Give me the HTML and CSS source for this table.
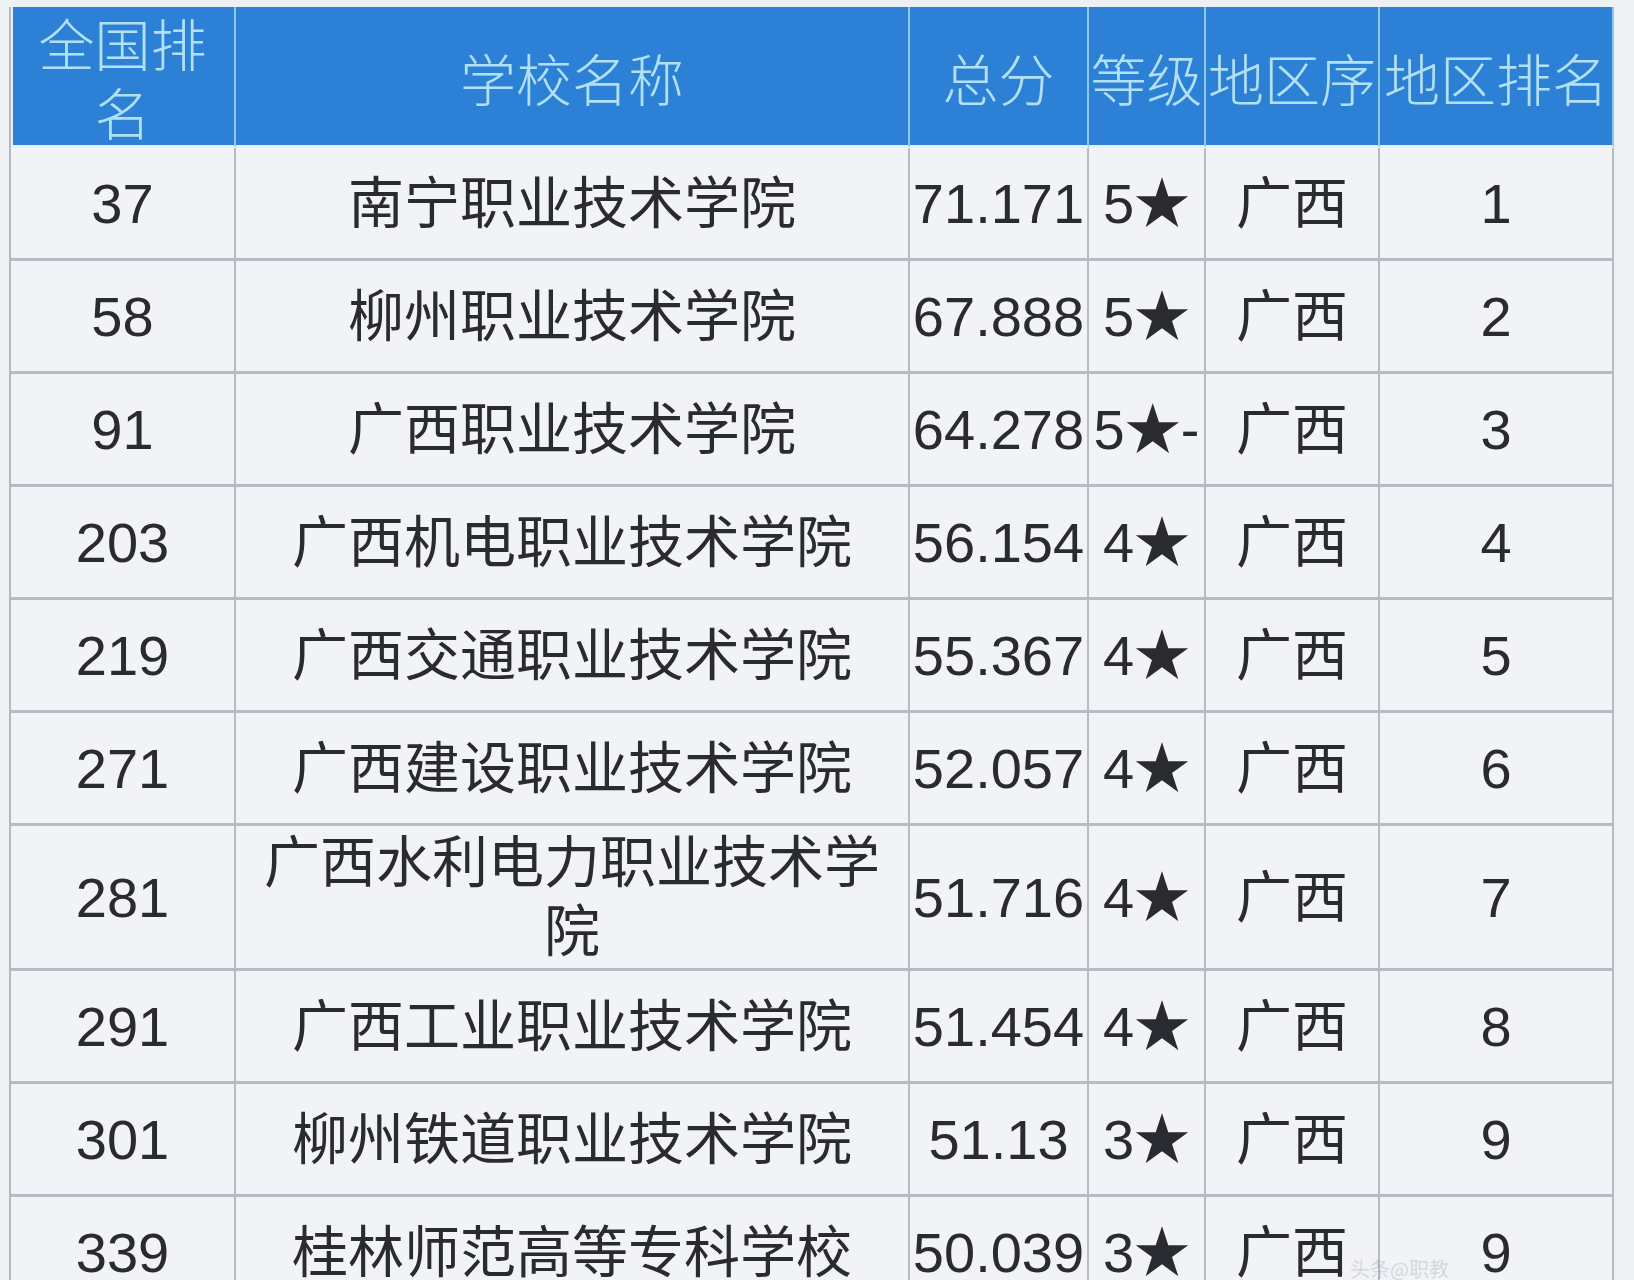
FILE: index.html
```html
<!DOCTYPE html>
<html lang="zh-CN">
<head>
<meta charset="utf-8">
<title>广西高职院校排名</title>
<link rel="stylesheet" href="styles.css">
</head>
<body>
<div class="sheet">
  <div class="grid">
    <div class="cell head first">全国排名</div>
    <div class="cell head">学校名称</div>
    <div class="cell head">总分</div>
    <div class="cell head">等级</div>
    <div class="cell head">地区序</div>
    <div class="cell head">地区排名</div>

    <div class="cell num">37</div><div class="cell">南宁职业技术学院</div><div class="cell num">71.171</div><div class="cell num">5★</div><div class="cell">广西</div><div class="cell num">1</div>
    <div class="cell num">58</div><div class="cell">柳州职业技术学院</div><div class="cell num">67.888</div><div class="cell num">5★</div><div class="cell">广西</div><div class="cell num">2</div>
    <div class="cell num">91</div><div class="cell">广西职业技术学院</div><div class="cell num">64.278</div><div class="cell num">5★-</div><div class="cell">广西</div><div class="cell num">3</div>
    <div class="cell num">203</div><div class="cell">广西机电职业技术学院</div><div class="cell num">56.154</div><div class="cell num">4★</div><div class="cell">广西</div><div class="cell num">4</div>
    <div class="cell num">219</div><div class="cell">广西交通职业技术学院</div><div class="cell num">55.367</div><div class="cell num">4★</div><div class="cell">广西</div><div class="cell num">5</div>
    <div class="cell num">271</div><div class="cell">广西建设职业技术学院</div><div class="cell num">52.057</div><div class="cell num">4★</div><div class="cell">广西</div><div class="cell num">6</div>
    <div class="cell num">281</div><div class="cell">广西水利电力职业技术学院</div><div class="cell num">51.716</div><div class="cell num">4★</div><div class="cell">广西</div><div class="cell num">7</div>
    <div class="cell num">291</div><div class="cell">广西工业职业技术学院</div><div class="cell num">51.454</div><div class="cell num">4★</div><div class="cell">广西</div><div class="cell num">8</div>
    <div class="cell num">301</div><div class="cell">柳州铁道职业技术学院</div><div class="cell num">51.13</div><div class="cell num">3★</div><div class="cell">广西</div><div class="cell num">9</div>
    <div class="cell num">339</div><div class="cell">桂林师范高等专科学校</div><div class="cell num">50.039</div><div class="cell num">3★</div><div class="cell">广西</div><div class="cell num">9</div>
  </div>
</div>
<div class="watermark">头条@职教</div>
</body>
</html>
```

FILE: styles.css
```css
html, body {
  margin: 0;
  background: #eef1f4;
}

body {
  width: 1634px;
  height: 1280px;
  overflow: hidden;
  position: relative;
}

.sheet {
  padding: 7px 0 0 9px;
}

.grid {
  display: grid;
  grid-template-columns: 225px 674px 179px 117px 174px 234px;
  grid-template-rows: 141px;
  grid-auto-rows: minmax(113px, auto);
  width: max-content;
  border-left: 2px solid #b3b9c4;
}

.cell {
  box-sizing: border-box;
  display: flex;
  align-items: center;
  justify-content: center;
  text-align: center;
  padding: 2px;
  background: #f1f3f6;
  color: #2a2a31;
  border-right: 2px solid #b6bcc6;
  border-bottom: 3px solid #b6bcc6;
  font-family: "Liberation Sans", "Noto Sans CJK SC", sans-serif;
  font-size: 56px;
  line-height: 69px;
}

.num {
  white-space: nowrap;
}

.head {
  background: #2c80d5;
  color: #b2e1f6;
  font-family: "Noto Sans CJK SC", sans-serif;
  font-weight: 300;
  white-space: nowrap;
  border-right-color: #8ec8ee;
  border-bottom: 3px solid #e9f2fa;
}

.head.first {
  white-space: normal;
  box-shadow: inset 2px 0 0 #e9f2fa;
}

.watermark {
  position: absolute;
  left: 1350px;
  top: 1254px;
  font-family: "Noto Sans CJK SC", sans-serif;
  font-size: 20px;
  color: rgba(140, 146, 158, 0.3);
  white-space: nowrap;
}
```
